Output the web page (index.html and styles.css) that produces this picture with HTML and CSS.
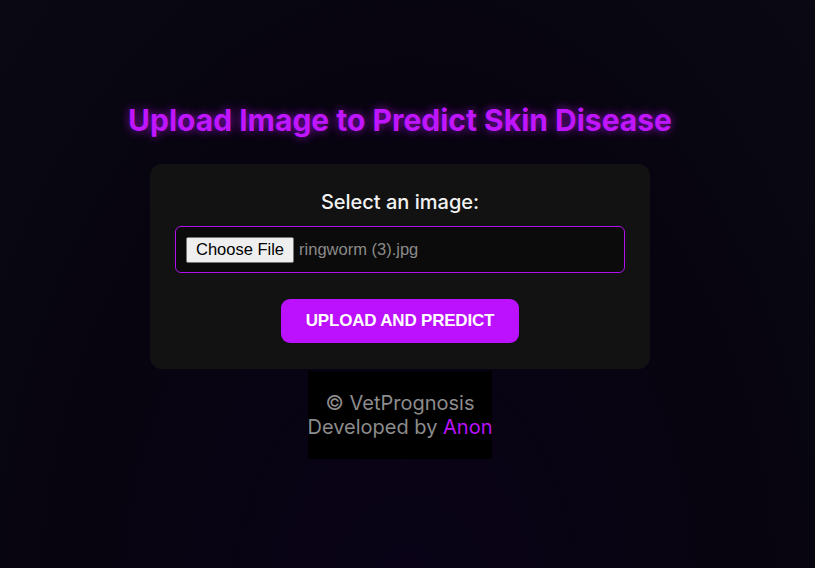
FILE: index.html
```html
<!DOCTYPE html>
<html lang="en">
<head>
<meta charset="utf-8">
<title>VetPrognosis</title>
<link rel="stylesheet" href="styles.css">
</head>
<body>
<main class="page">
  <h1 class="title">Upload Image to Predict Skin Disease</h1>
  <form class="card">
    <label class="label">Select an image:</label>
    <div class="file-field">
      <span class="file-btn">Choose File</span>
      <span class="file-name">ringworm (3).jpg</span>
    </div>
    <button type="button" class="submit">UPLOAD AND PREDICT</button>
  </form>
  <footer class="footer">
    <p>© VetPrognosis</p>
    <p>Developed by <span class="accent">Anon</span></p>
  </footer>
</main>
</body>
</html>
```
FILE: styles.css
```css
html, body {
  margin: 0;
  height: 100%;
}
body {
  background: radial-gradient(ellipse at 50% 110%, #0a0318 0%, #07040f 60%, #0a0913 100%);
  font-family: Inter, "Noto Sans", sans-serif;
  color: #fff;
}
.page {
  width: 800px;
  height: 568px;
  display: flex;
  flex-direction: column;
  align-items: center;
  padding-top: 100px;
  box-sizing: border-box;
}
.title {
  margin: 0 0 24px;
  font-size: 30px;
  line-height: 42px;
  font-weight: 700;
  color: #bf16ff;
  text-shadow: 0 0 10px rgba(191, 22, 255, 0.7);
  height: 40px;
  display: flex;
  align-items: center;
}
.card {
  width: 500px;
  box-sizing: border-box;
  background: #121212;
  border-radius: 12px;
  padding: 26px 25px 26px;
  display: flex;
  flex-direction: column;
  align-items: center;
}
.label {
  font-size: 20px;
  line-height: 24px;
  font-weight: 500;
  color: #f2f2f2;
  margin-bottom: 12px;
}
.file-field {
  align-self: stretch;
  height: 47px;
  box-sizing: border-box;
  border: 1px solid #b010f0;
  border-radius: 6px;
  background: #0b0b0b;
  display: flex;
  align-items: center;
  padding: 0 10px;
  gap: 5px;
  font-family: "Liberation Sans", Arial, sans-serif;
  font-size: 16.5px;
}
.file-btn {
  display: flex;
  align-items: center;
  height: 26px;
  box-sizing: border-box;
  padding: 0 9px 0 9px;
  background: #efefef;
  border: 1px solid #767676;
  border-radius: 2px;
  color: #000;
}
.file-name {
  color: #8a8a8a;
}
.submit {
  margin-top: 26px;
  width: 238px;
  height: 44px;
  border: none;
  border-radius: 9px;
  background: #bb11ff;
  color: #fff;
  font-family: "Liberation Sans", Arial, sans-serif;
  font-weight: 700;
  font-size: 17px;
  letter-spacing: -0.2px;
  cursor: pointer;
}
.footer {
  margin-top: 2px;
  background: #000;
  padding: 20px 0;
  text-align: center;
  color: #8c8c8c;
  font-size: 20px;
  line-height: 24px;
}
.footer p {
  margin: 0;
}
.accent {
  color: #bb11ff;
}
```
